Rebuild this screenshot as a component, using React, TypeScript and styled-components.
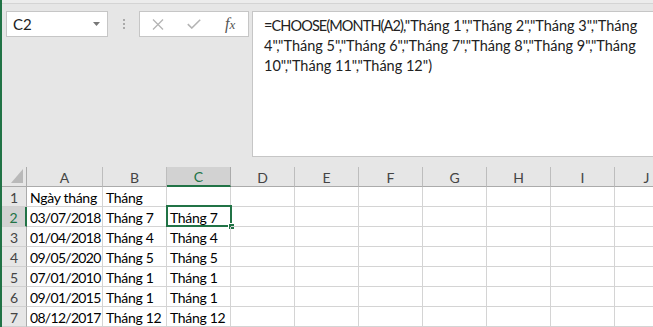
import React, { FC } from 'react';
import styled, { createGlobalStyle } from 'styled-components';

const GlobalStyle = createGlobalStyle`
    html, body{
        margin: 0;
        padding: 0;
        background: #e6e6e6;
    }
    *{
        box-sizing: border-box;
    }
`;

const COLS = ['A', 'B', 'C', 'D', 'E', 'F', 'G', 'H', 'I', 'J'];

const ROWS: string[][] = [
    ['Ngày tháng', 'Tháng', ''],
    ['03/07/2018', 'Tháng 7', 'Tháng 7'],
    ['01/04/2018', 'Tháng 4', 'Tháng 4'],
    ['09/05/2020', 'Tháng 5', 'Tháng 5'],
    ['07/01/2010', 'Tháng 1', 'Tháng 1'],
    ['09/01/2015', 'Tháng 1', 'Tháng 1'],
    ['08/12/2017', 'Tháng 12', 'Tháng 12'],
];

const FORMULA_LINES = [
    '4","Tháng 5","Tháng 6","Tháng 7","Tháng 8","Tháng 9","Tháng',
    '10","Tháng 11","Tháng 12")',
];

const isDate = (v: string) => /^\d\d\/\d\d\/\d{4}$/.test(v);

const App: FC = () => {
    return (
        <Window>
            <GlobalStyle />
            <TopStrip />
            <FormulaArea>
                <NameBox>
                    <span>C2</span>
                    <svg width="8" height="5" viewBox="0 0 8 5">
                        <path d="M0 0 L7 0 L3.5 4 Z" fill="#777" />
                    </svg>
                </NameBox>
                <Grip>
                    <i /><i /><i />
                </Grip>
                <ButtonsBox>
                    <ToolSlot>
                        <svg width="12" height="11" viewBox="0 0 12 11">
                            <path d="M1 0.5 L11 10.5 M11 0.5 L1 10.5" stroke="#b4b4b4" strokeWidth="1.3" fill="none" />
                        </svg>
                    </ToolSlot>
                    <ToolSlot>
                        <svg width="14" height="10" viewBox="0 0 14 10">
                            <path d="M0.8 5.2 L4.8 9 L13.2 0.8" stroke="#b4b4b4" strokeWidth="1.6" fill="none" />
                        </svg>
                    </ToolSlot>
                    <ToolSlot>
                        <Fx>f<small>x</small></Fx>
                    </ToolSlot>
                </ButtonsBox>
                <FormulaBar>
                    <FormulaLine>
                        <Caps>=CHOOSE(MONTH(A2)</Caps>,"Tháng 1","Tháng 2","Tháng 3","Tháng
                    </FormulaLine>
                    {FORMULA_LINES.map((line, i) => (
                        <FormulaLine key={i}>{line}</FormulaLine>
                    ))}
                </FormulaBar>
            </FormulaArea>
            <Sheet>
                <Corner>
                    <svg width="13" height="15" viewBox="0 0 13 15">
                        <path d="M12 0 L12 14 L0 14 Z" fill="#b9b9b9" />
                    </svg>
                </Corner>
                {COLS.map((c) => (
                    <ColHeader key={c} active={c === 'C'}>{c}</ColHeader>
                ))}
                {ROWS.map((row, r) => (
                    <React.Fragment key={r}>
                        <RowHeader active={r === 1}>{r + 1}</RowHeader>
                        {COLS.map((c, ci) => {
                            const value = row[ci] || '';
                            return (
                                <Cell key={c} numeric={isDate(value)}>
                                    {value}
                                    {r === 1 && c === 'C' ? (
                                        <Selection>
                                            <FillHandle />
                                        </Selection>
                                    ) : null}
                                </Cell>
                            );
                        })}
                    </React.Fragment>
                ))}
            </Sheet>
        </Window>
    );
};

const Window = styled.div`
    width: 653px;
    height: 327px;
    overflow: hidden;
    background: #e6e6e6;
    border-left: 2px solid #217346;
    display: flex;
    flex-direction: column;
    font-family: "Lato", "Liberation Sans", sans-serif;
`;

const TopStrip = styled.div`
    height: 4px;
    flex-shrink: 0;
    background: #ececec;
    border-bottom: 1px solid #d4d4d4;
`;

const FormulaArea = styled.div`
    display: flex;
    align-items: flex-start;
    padding: 7px 0 0 4px;
    margin-bottom: 10px;
    flex-shrink: 0;
`;

const NameBox = styled.div`
    width: 102px;
    height: 26px;
    background: #fff;
    border: 1px solid #c6c6c6;
    display: flex;
    align-items: center;
    justify-content: space-between;
    padding: 0 6px 0 6px;
    font-size: 15px;
    color: #222;
    svg{
        margin-top: 1px;
    }
`;

const Grip = styled.div`
    width: 31px;
    height: 26px;
    display: flex;
    flex-direction: column;
    align-items: center;
    justify-content: center;
    gap: 2px;
    i{
        display: block;
        width: 2px;
        height: 2px;
        background: #aaa;
    }
`;

const ButtonsBox = styled.div`
    width: 110px;
    height: 26px;
    background: #fff;
    border: 1px solid #c6c6c6;
    display: flex;
    align-items: center;
`;

const ToolSlot = styled.div`
    width: 36px;
    height: 100%;
    display: flex;
    align-items: center;
    justify-content: center;
    &:first-child{
        width: 37px;
    }
`;

const Fx = styled.span`
    font-family: "Liberation Serif", serif;
    font-style: italic;
    font-size: 16px;
    color: #555;
    small{
        font-size: 13px;
    }
`;

const FormulaBar = styled.div`
    flex: 1;
    height: 146px;
    margin-left: 3px;
    margin-right: -4px;
    background: #fff;
    border: 1px solid #c6c6c6;
    padding: 4px 0 0 11px;
`;

const FormulaLine = styled.div`
    white-space: nowrap;
    font-size: 14.5px;
    line-height: 20px;
    color: #222;
`;

const Caps = styled.span`
    letter-spacing: -0.9px;
`;

const Sheet = styled.div`
    display: grid;
    grid-template-columns: 25px 76px repeat(9, 64px);
    grid-auto-rows: 20px;
    background: #fff;
`;

const Corner = styled.div`
    background: #e6e6e6;
    border-right: 1px solid #ababab;
    border-bottom: 1px solid #ababab;
    display: flex;
    align-items: flex-end;
    justify-content: flex-end;
    padding: 0 2px 2px 0;
`;

const ColHeader = styled.div<{ active?: boolean }>`
    background: ${(p) => (p.active ? '#d2d2d2' : '#e6e6e6')};
    color: ${(p) => (p.active ? '#217346' : '#444')};
    border-right: 1px solid ${(p) => (p.active ? '#ababab' : '#bdbdbd')};
    border-bottom: ${(p) => (p.active ? '2px solid #217346' : '1px solid #ababab')};
    font-size: 14px;
    display: flex;
    align-items: center;
    justify-content: center;
    padding-top: 1px;
`;

const RowHeader = styled.div<{ active?: boolean }>`
    background: ${(p) => (p.active ? '#d2d2d2' : '#e6e6e6')};
    color: ${(p) => (p.active ? '#217346' : '#444')};
    border-right: ${(p) => (p.active ? '2px solid #217346' : '1px solid #ababab')};
    border-bottom: 1px solid #d0d0d0;
    font-size: 14px;
    display: flex;
    align-items: center;
    justify-content: center;
    padding-top: 1px;
`;

const Cell = styled.div<{ numeric?: boolean }>`
    position: relative;
    border-right: 1px solid #d4d4d4;
    border-bottom: 1px solid #d4d4d4;
    font-size: 14px;
    letter-spacing: ${(p) => (p.numeric ? '-0.7px' : '-0.3px')};
    line-height: 19px;
    color: #000;
    white-space: nowrap;
    padding: 1px 3px 0 3px;
    text-align: ${(p) => (p.numeric ? 'right' : 'left')};
`;

const Selection = styled.div`
    position: absolute;
    left: -1px;
    top: -2px;
    right: -2px;
    bottom: -1px;
    border: 2px solid #217346;
    pointer-events: none;
`;

const FillHandle = styled.div`
    position: absolute;
    right: -5px;
    bottom: -5px;
    width: 7px;
    height: 7px;
    background: #217346;
    border: 1px solid #fff;
`;

export default App;
